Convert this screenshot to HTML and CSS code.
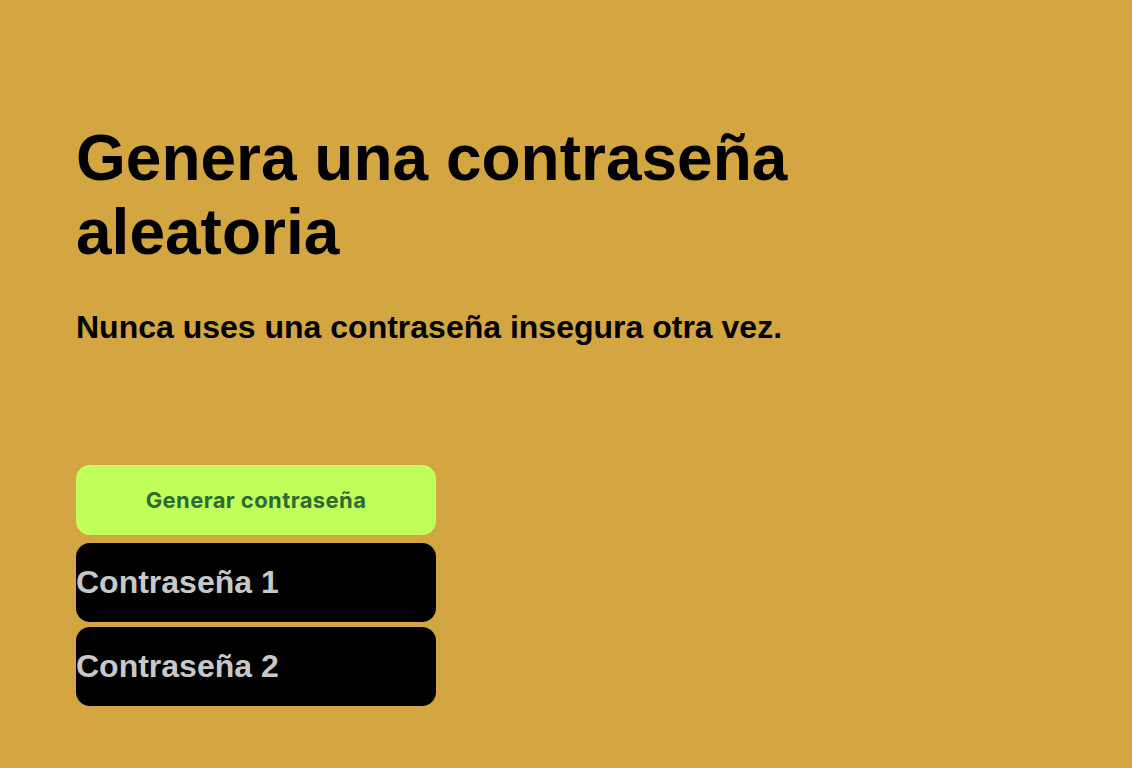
FILE: index.html
```html
<!DOCTYPE html>
<html lang="es">
<head>
<meta charset="utf-8">
<title>Generador de contraseñas</title>
<link rel="stylesheet" href="styles.css">
</head>
<body>
<main class="page">
  <h1 class="title">Genera una contraseña aleatoria</h1>
  <p class="subtitle">Nunca uses una contraseña insegura otra vez.</p>
  <div class="controls">
    <button class="generate" type="button">Generar contraseña</button>
    <div class="outputs">
      <div class="output">Contraseña 1</div>
      <div class="output">Contraseña 2</div>
    </div>
  </div>
</main>
</body>
</html>
```

FILE: styles.css
```css
html, body {
  margin: 0;
  padding: 0;
  background: #d3a641;
}

body {
  font-family: "Liberation Sans", Arial, Helvetica, sans-serif;
  color: #000;
}

.page {
  padding: 121px 76px 0 76px;
}

.title {
  margin: 0;
  width: 760px;
  font-size: 64px;
  font-weight: 700;
  line-height: normal;
}

.subtitle {
  margin: 40px 0 0 0;
  font-size: 32px;
  font-weight: 700;
  line-height: normal;
}

.controls {
  margin-top: 119px;
  width: 360px;
  display: flex;
  flex-direction: column;
  gap: 8px;
}

.generate {
  height: 70px;
  border: none;
  border-radius: 14px;
  background: #c1ff5a;
  color: #2c6b34;
  font-family: Inter, "Liberation Sans", sans-serif;
  font-size: 22px;
  font-weight: 700;
  letter-spacing: 0.4px;
  cursor: pointer;
}

.outputs {
  display: flex;
  flex-direction: column;
  gap: 5px;
}

.output {
  height: 79px;
  border-radius: 14px;
  background: #000;
  color: #c8c8c8;
  font-size: 32px;
  font-weight: 700;
  display: flex;
  align-items: center;
}
```
